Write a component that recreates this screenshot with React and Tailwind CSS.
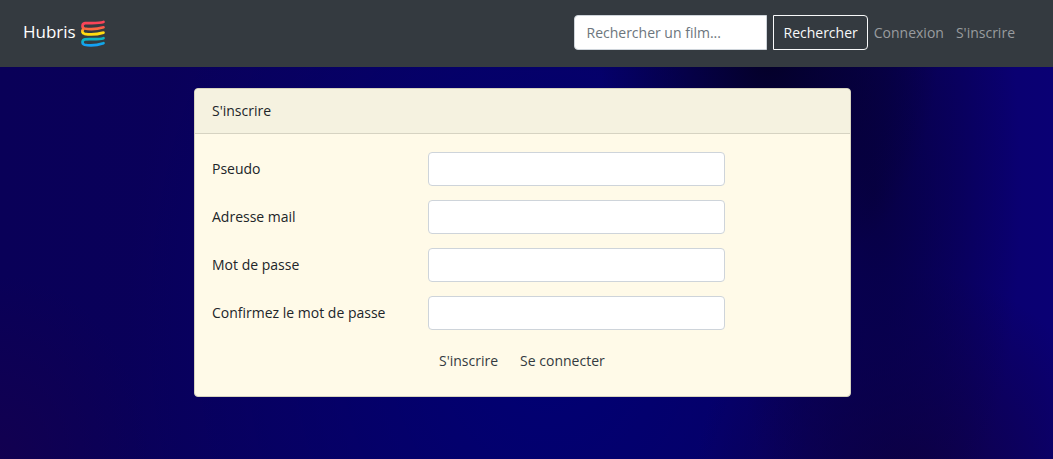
const fields = [
  { id: 'pseudo', label: 'Pseudo', type: 'text' },
  { id: 'email', label: 'Adresse mail', type: 'email' },
  { id: 'password', label: 'Mot de passe', type: 'password' },
  { id: 'confirm', label: 'Confirmez le mot de passe', type: 'password' },
];

function Logo() {
  return (
    <svg className="h-[30px] w-[26px]" viewBox="0 0 26 30" fill="none" strokeWidth="2.7" strokeLinecap="round" aria-hidden="true">
      <defs>
        <linearGradient id="warm" x1="0" y1="5" x2="0" y2="12" gradientUnits="userSpaceOnUse">
          <stop offset="0.4" stopColor="#fb4458" />
          <stop offset="0.8" stopColor="#fa6a3e" />
        </linearGradient>
        <linearGradient id="sun" x1="0" y1="11" x2="0" y2="15" gradientUnits="userSpaceOnUse">
          <stop offset="0" stopColor="#fa7a3a" />
          <stop offset="0.8" stopColor="#ffdc10" />
        </linearGradient>
        <linearGradient id="cool" x1="0" y1="21" x2="0" y2="28" gradientUnits="userSpaceOnUse">
          <stop offset="0.2" stopColor="#0cb4c4" />
          <stop offset="0.8" stopColor="#14a0f4" />
        </linearGradient>
      </defs>
      <path stroke="url(#cool)" d="M23.500 20.200C18 21.900 10 20.800 5 21.300C1.800 21.800 1.800 26 4.500 26.700C10 27.900 18 27 23.500 25.200" />
      <path stroke="url(#sun)" d="M3 11.500C1.700 13 2.300 15.300 4.500 15.800C10 16.800 18 16.200 23.500 14.600" />
      <path stroke="url(#warm)" d="M23.500 4C18 5.700 10 4.700 5 5.200C1.800 5.700 1.800 9.800 4.500 10.500C10 11.500 18 10.900 23.500 9.300" />
    </svg>
  );
}

export default function App() {
  return (
    <div className="min-h-screen bg-[#090060] bg-[radial-gradient(ellipse_16%_50%_at_73%_12%,#040028_0%,#04002800_100%),radial-gradient(ellipse_14%_90%_at_83%_42%,#070044_0%,#07004400_100%),radial-gradient(ellipse_20%_45%_at_86%_104%,#0f0044_0%,#0f004400_100%),radial-gradient(ellipse_14%_40%_at_0%_100%,#120050_0%,#12005000_100%),radial-gradient(ellipse_40%_120%_at_52%_70%,#000074_0%,#00007400_100%),linear-gradient(90deg,#090058_0%,#0a0060_70%,#0a0074_100%)] font-['Open_Sans',sans-serif] text-sm text-[#212529]">
      <header className="flex min-h-[67px] flex-wrap items-center justify-between gap-y-2 bg-[#343a40] pr-8 pb-0.5 pl-[23px]">
        <a href="#" className="flex items-center gap-1 text-[17px] text-white">
          Hubris
          <Logo />
        </a>
        <div className="flex flex-wrap items-center">
          <form className="mr-1.5 flex gap-1.5" role="search" onSubmit={(e) => e.preventDefault()}>
            <input
              type="search"
              aria-label="Rechercher un film"
              placeholder="Rechercher un film..."
              className="h-[35px] w-[193px] rounded-l border border-[#ced4da] bg-white px-[11px] text-[#495057] placeholder:text-[#6c757d]"
            />
            <button type="submit" className="h-[35px] rounded-r border border-[#f8f9fa] px-[9px] text-[#f8f9fa]">
              Rechercher
            </button>
          </form>
          <nav className="flex gap-3 pr-1.5 text-[#999c9f]">
            <a href="#">Connexion</a>
            <a href="#">S'inscrire</a>
          </nav>
        </div>
      </header>

      <main className="pt-[21px] pr-2 pb-6">
        <section className="mx-auto max-w-[657px] rounded border border-[#d6d3bf] bg-[#fffae8]">
          <h1 className="rounded-t border-b border-[#d6d3c2] bg-[#f5f2e0] px-[17px] py-3 leading-5">S'inscrire</h1>
          <form className="flex flex-col gap-3.5 px-[17px] py-[18px]" onSubmit={(e) => e.preventDefault()}>
            {fields.map((f) => (
              <div key={f.id} className="grid grid-cols-12 items-center gap-x-[27px]">
                <label htmlFor={f.id} className="col-span-4 whitespace-nowrap">
                  {f.label}
                </label>
                <input
                  id={f.id}
                  type={f.type}
                  className="col-span-6 h-[34px] min-w-0 rounded border border-[#ced4da] bg-white px-[11px]"
                />
              </div>
            ))}
            <div className="grid grid-cols-12 gap-x-[27px]">
              <div className="col-span-8 col-start-5 flex items-center text-[#343a40]">
                <button type="submit" className="h-[34px] px-[11px]">
                  S'inscrire
                </button>
                <a href="#" className="px-[11px]">
                  Se connecter
                </a>
              </div>
            </div>
          </form>
        </section>
      </main>
    </div>
  );
}
